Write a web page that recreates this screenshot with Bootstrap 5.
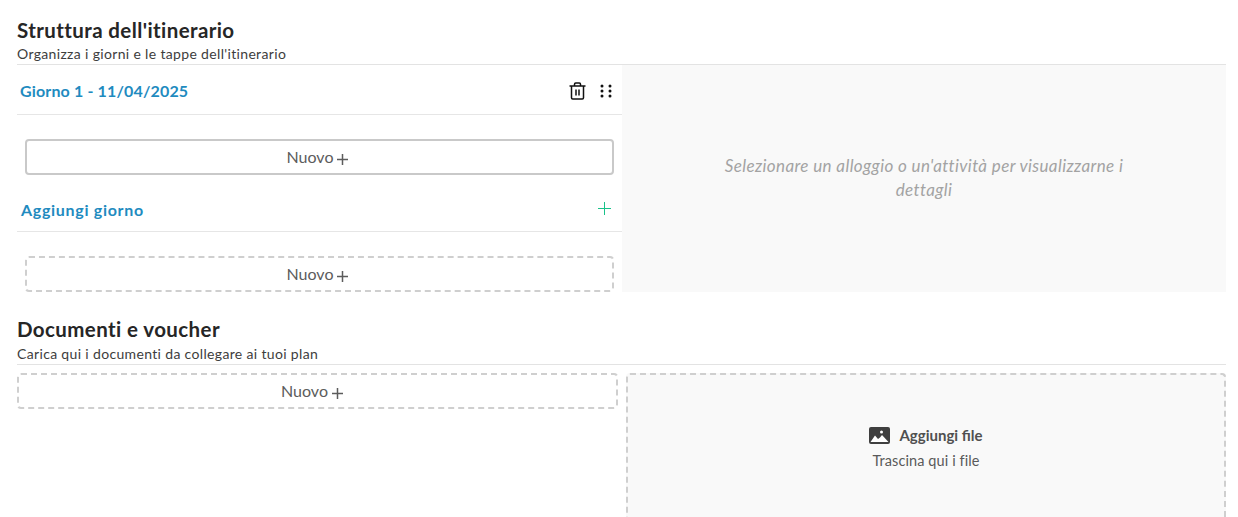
<!DOCTYPE html>
<html lang="it">
<head>
<meta charset="utf-8">
<title>Itinerario</title>
<link href="https://cdn.jsdelivr.net/npm/bootstrap@5.3.0/dist/css/bootstrap.min.css" rel="stylesheet">
<style>
html,body{height:517px;overflow:hidden}
body{font-family:"Lato","Noto Sans",sans-serif;background:#fff;color:#2b2b2b}
.page-wrap{padding:19px 12px 0 17px;width:1238px}
.sec-title{font-size:20.5px;line-height:22px;font-weight:700;color:#262626;margin:0;letter-spacing:.4px}
.sec-sub{font-size:14px;line-height:16px;color:#3d3d3d;margin:5px 0 0;height:18px;letter-spacing:.34px}
.docs .sec-sub{margin-top:6px}
.sec-rule{border-bottom:1px solid #e3e3e3}
.two-up{display:grid;grid-template-columns:605px 604px}
.day-head{height:50px;border-bottom:1px solid #e6e6e6;padding:2px 10px 0 3px}
.add-head{height:50px;border-bottom:1px solid #e6e6e6;padding:6px 11px 0 4px}
.day-name{font-size:16px;font-weight:700;color:#1f8bbf;letter-spacing:.15px}
.add-name{letter-spacing:.7px}
.plus-mark{margin-bottom:2px}
.new-box{height:36px;background:#fff;border-radius:4px;color:#5c5c5c;font-size:16px;display:flex;align-items:center;justify-content:center;gap:4px;width:100%;padding:0 4px 0 0}
.docs .new-box{padding-right:11px}
.solid-box{border:2px solid #c9c9c9}
.dash-box{border:2px dashed #cfcfcf}
.slot-a{padding:24px 8px 7px 8px}
.slot-b{padding:24px 8px 0 8px}
.detail-pane{background:#f9f9f9;height:227px;color:#a3a3a3;font-style:italic;font-size:17px;line-height:24px;text-align:center;padding:0 90px 2px;letter-spacing:.38px}
.docs{margin-top:26px}
.docs-grid{display:grid;grid-template-columns:601px 600px;gap:8px;padding-top:8px}
.drop-zone{height:160px;background:#f9f9f9;border:2px dashed #cfcfcf;border-bottom:0;border-radius:4px 4px 0 0;padding-top:48px;text-align:center}
.drop-title{font-size:15px;font-weight:700;color:#505050;gap:9px;height:24px}
.drop-sub{font-size:14.5px;color:#5a5a5a;margin-top:4px;line-height:20px;letter-spacing:.1px}
.icon-btns{gap:14px}
</style>
</head>
<body>
<main class="page-wrap">
  <section>
    <h2 class="sec-title">Struttura dell'itinerario</h2>
    <p class="sec-sub">Organizza i giorni e le tappe dell'itinerario</p>
    <div class="sec-rule"></div>
    <div class="two-up">
      <div>
        <div class="day-head d-flex align-items-center justify-content-between">
          <span class="day-name">Giorno 1 - 11/04/2025</span>
          <span class="d-flex align-items-center icon-btns">
            <svg width="17" height="18" viewBox="0 0 17 18" fill="none" stroke="#111" stroke-width="1.5"><path d="M.5 4h16M5.500 4V2.200C5.500 1.500 6 1 6.700 1h3.600c.7 0 1.200.5 1.200 1.200V4M2.500 4v11.800c0 .7.500 1.200 1.200 1.200h9.600c.7 0 1.200-.5 1.200-1.200V4M7 7.500v6M10 7.500v6"/></svg>
            <svg width="12" height="14" viewBox="0 0 12 14" fill="#111"><circle cx="2" cy="2" r="1.500"/><circle cx="10" cy="2" r="1.500"/><circle cx="2" cy="7" r="1.500"/><circle cx="10" cy="7" r="1.500"/><circle cx="2" cy="12" r="1.500"/><circle cx="10" cy="12" r="1.500"/></svg>
          </span>
        </div>
        <div class="slot-a">
          <button type="button" class="new-box solid-box">Nuovo
            <svg class="mt-1" width="11" height="11" viewBox="0 0 11 11" stroke="#5c5c5c" stroke-width="1.500"><path d="M5.500 0v11M0 5.500h11"/></svg>
          </button>
        </div>
        <div class="add-head d-flex align-items-center justify-content-between">
          <span class="day-name add-name">Aggiungi giorno</span>
          <svg class="plus-mark" width="13" height="13" viewBox="0 0 13 13" stroke="#19c28a" stroke-width="1"><path d="M6.500 0v13M0 6.500h13"/></svg>
        </div>
        <div class="slot-b">
          <button type="button" class="new-box dash-box">Nuovo
            <svg class="mt-1" width="11" height="11" viewBox="0 0 11 11" stroke="#5c5c5c" stroke-width="1.500"><path d="M5.500 0v11M0 5.500h11"/></svg>
          </button>
        </div>
      </div>
      <div class="detail-pane d-flex align-items-center justify-content-center">
        <span>Selezionare un alloggio o un'attività per visualizzarne i dettagli</span>
      </div>
    </div>
  </section>
  <section class="docs">
    <h2 class="sec-title">Documenti e voucher</h2>
    <p class="sec-sub">Carica qui i documenti da collegare ai tuoi plan</p>
    <div class="sec-rule"></div>
    <div class="docs-grid">
      <div>
        <button type="button" class="new-box dash-box">Nuovo
          <svg class="mt-1" width="11" height="11" viewBox="0 0 11 11" stroke="#5c5c5c" stroke-width="1.500"><path d="M5.500 0v11M0 5.500h11"/></svg>
        </button>
      </div>
      <div class="drop-zone">
        <div class="drop-title d-flex align-items-center justify-content-center">
          <svg width="21" height="17" viewBox="0 0 21 17"><rect width="21" height="17" rx="2" fill="#3f3f3f"/><circle cx="12.500" cy="5" r="1.500" fill="#fff"/><path d="M1.500 15l4.500-6.500 3 3.500 2-1.500 2-2.500 6.500 7z" fill="#fff"/></svg>
          <span>Aggiungi file</span>
        </div>
        <div class="drop-sub">Trascina qui i file</div>
      </div>
    </div>
  </section>
</main>
<script src="https://cdn.jsdelivr.net/npm/bootstrap@5.3.0/dist/js/bootstrap.bundle.min.js"></script>
</body>
</html>
